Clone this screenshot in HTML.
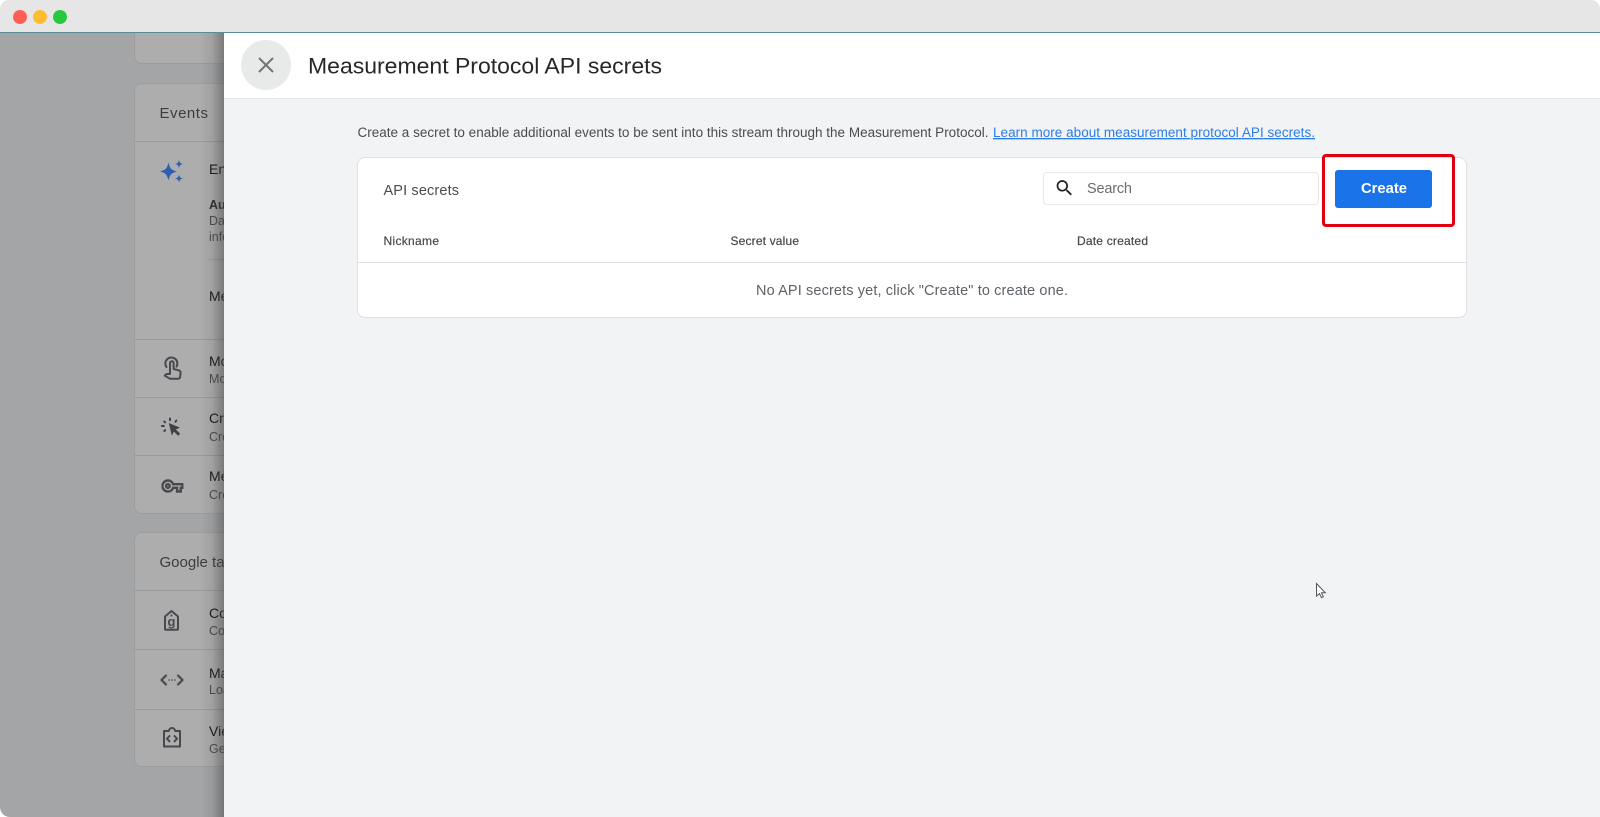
<!DOCTYPE html>
<html lang="en"><head><meta charset="utf-8"><title>Measurement Protocol API secrets</title>
<style>
html,body{margin:0;padding:0;width:1600px;height:817px;overflow:hidden;background:#fff}
body{position:relative;font-family:"Liberation Sans",sans-serif}
div{position:absolute;box-sizing:border-box}
svg{position:absolute;left:0;top:0}
text{font-family:"Liberation Sans",sans-serif}
.b{filter:blur(.35px)}
</style></head><body>
<div style="left:0;top:0;width:1600px;height:817px;border-radius:10px 10px 0 10px;overflow:hidden;background:#a4a5a7">
  <!-- underlying page -->
  <div style="left:134px;top:20px;width:300px;height:44px;background:#adadad;border:1px solid #9c9d9f;border-radius:8px"></div>
  <div style="left:134px;top:83px;width:300px;height:431px;background:#adadad;border:1px solid #9c9d9f;border-radius:8px"></div>
  <div style="left:134px;top:532px;width:300px;height:235px;background:#adadad;border:1px solid #9c9d9f;border-radius:8px"></div>
  <svg width="240" height="817" viewBox="0 0 240 817">
    <g stroke="#9a9b9d" stroke-width="1">
      <path d="M134 141.500H240M209 259.500H240M134 339.500H240M134 397.500H240M134 455.500H240M134 590.500H240M134 649.500H240M134 709.500H240"/>
    </g>
    <g class="b">
    <g font-size="15" fill="#3a3c40">
      <text x="159.500" y="118" textLength="48.500" lengthAdjust="spacing">Events</text>
      <text x="159.500" y="567">Google tag</text>
    </g>
    <g font-size="14" fill="#141416">
      <text x="209" y="174">Enhanced</text>
      <text x="209" y="301">Measurement</text>
      <text x="209" y="366">Modify</text>
      <text x="209" y="423">Create</text>
      <text x="209" y="481">Measurement</text>
      <text x="209" y="618">Configure</text>
      <text x="209" y="678">Manage</text>
      <text x="209" y="736">View</text>
    </g>
    <g font-size="12.500" fill="#47494d">
      <text x="209" y="209" fill="#2a2b30" font-weight="bold">Automatically</text>
      <text x="209" y="225">Data</text>
      <text x="209" y="241">information</text>
      <text x="209" y="383">Modify</text>
      <text x="209" y="441">Create</text>
      <text x="209" y="499">Create</text>
      <text x="209" y="635">Configure</text>
      <text x="209" y="694">Load</text>
      <text x="209" y="753">Get</text>
    </g>
    <!-- sparkle -->
    <g fill="#2f5fae">
      <path d="M168.500 162.500C170 168.500 171.300 170 177 171.500C171.300 173 170 174.500 168.500 180.500C167 174.500 165.700 173 160 171.500C165.700 170 167 168.500 168.500 162.500Z"/>
      <path d="M179 160C179.700 162.800 180.200 163.300 183 164C180.200 164.700 179.700 165.200 179 168C178.300 165.200 177.800 164.700 175 164C177.800 163.300 178.300 162.800 179 160Z"/>
      <path d="M179 174.500C179.700 177.300 180.200 177.800 183 178.500C180.200 179.200 179.700 179.700 179 182.500C178.300 179.700 177.800 179.200 175 178.500C177.800 177.800 178.300 177.300 179 174.500Z"/>
    </g>
    <g fill="none" stroke="#47494f" stroke-width="2" stroke-linejoin="round" stroke-linecap="round">
      <!-- touch -->
      <path d="M170 372V363a1.800 1.800 0 0 1 3.600 0V369l5 1.300c1.200.3 2 1.100 2 2.300l-.5 4.500c-.2 1-.9 1.600-2 1.600H170.500c-.6 0-1.100-.2-1.500-.5l-4.200-2.500 1-1.200c.4-.4 1.500-.9 4.200-.5z"/>
      <path d="M166.500 367a6 6 0 1 1 10-.4"/>
      <!-- code brackets -->
      <path d="M166 675.500l-4.500 4.500 4.500 4.500M178 675.500l4.500 4.500-4.500 4.500" stroke-width="2.200"/>
      <path d="M169 680h.1M172 680h.1M175 680h.1" stroke-width="1.500"/>
      <!-- tag -->
      <path d="M171.500 611l6.500 5.500v12.500c0 .4-.3.700-.7.700h-11.600c-.4 0-.7-.3-.7-.7v-12.500z" stroke-width="2"/>
      <!-- clipboard -->
      <path d="M164 731h4.800c.3-1.700 1.600-3 3.200-3s2.900 1.300 3.200 3h4.800v15.500h-16z" stroke-width="2"/>
      <path d="M169.500 736l-2.500 2.700 2.500 2.700M174.500 736l2.500 2.700-2.500 2.700" stroke-width="2"/>
    </g>
    <text x="171.500" y="626" font-size="13" font-weight="bold" fill="#47494f" text-anchor="middle">g</text>
    <circle cx="171.500" cy="615.500" r="1" fill="#47494f"/>
    <!-- click sparkle cursor -->
    <path d="M168.800 423l11.200 4.600-4.200 1.900 4.400 4.300-2 2-4.400-4.300-1.900 4.200z" fill="#3f4146"/>
    <g stroke="#3f4146" stroke-width="2" stroke-linecap="round">
      <path d="M162 426h1.800M170 418.500v1.800M164.300 421.500l.8.800M176.300 420.500l-.8 1.200M164.300 431l.8-.8"/>
    </g>
    <!-- key -->
    <svg x="161.500" y="475" width="22" height="22" viewBox="0 0 24 24"><path fill="#47494f" stroke="#47494f" stroke-width=".6" d="M22 19h-6v-4h-2.680c-1.140 2.420-3.600 4-6.320 4-3.860 0-7-3.140-7-7s3.140-7 7-7c2.720 0 5.170 1.580 6.320 4H24v6h-2v4zm-4-2h2v-4h2v-2H11.940l-.23-.67C11.010 8.340 9.110 7 7 7c-2.760 0-5 2.240-5 5s2.240 5 5 5c2.110 0 4.010-1.340 4.710-3.330l.23-.67H18v4zM7 15c-1.650 0-3-1.350-3-3s1.350-3 3-3 3 1.350 3 3-1.350 3-3 3zm0-4c-.55 0-1 .45-1 1s.45 1 1 1 1-.45 1-1-.45-1-1-1z"/></svg>
    </g>
  </svg>
  <!-- panel shadow -->
  <div style="left:200px;top:33px;width:24px;height:784px;background:linear-gradient(to right,rgba(70,70,72,0),rgba(70,70,72,.12) 50%,rgba(70,70,72,.5))"></div>
  <!-- title bar -->
  <div style="left:0;top:0;width:1600px;height:33px;background:#e6e6e6;border-bottom:1px solid #5b8d96"></div>
  <div style="left:13px;top:10px;width:14px;height:14px;border-radius:50%;background:#ff5f57"></div>
  <div style="left:33px;top:10px;width:14px;height:14px;border-radius:50%;background:#febc2e"></div>
  <div style="left:53px;top:10px;width:14px;height:14px;border-radius:50%;background:#28c840"></div>
  <!-- panel -->
  <div style="left:224px;top:33px;width:1376px;height:784px;background:#f1f3f5"></div>
  <div style="left:224px;top:33px;width:1376px;height:66px;background:#fff;border-bottom:1px solid #e6e7e8"></div>
  <div style="left:241px;top:40px;width:50px;height:50px;border-radius:50%;background:#e8eaea"></div>
  <!-- card -->
  <div style="left:357px;top:157px;width:1110px;height:161px;background:#fff;border:1px solid #dfe1e4;border-radius:8px"></div>
  <div style="left:358px;top:262px;width:1108px;height:1px;background:#dfe1e4"></div>
  <div style="left:1043px;top:172px;width:276px;height:33px;background:#fff;border:1px solid #e6e8ea;border-radius:4px"></div>
  <div style="left:1335px;top:170px;width:97px;height:38px;background:#1a73e8;border-radius:3px"></div>
  <div style="left:1322px;top:154px;width:133px;height:73px;border:3px solid #e0000f;border-radius:4px"></div>
</div>
<svg width="1600" height="817" viewBox="0 0 1600 817">
  <g class="b">
  <path d="M259 58l14 14M273 58l-14 14" stroke="#70757a" stroke-width="2" fill="none"/>
  <text x="308" y="73.500" font-size="22" fill="#26272a" textLength="354" lengthAdjust="spacingAndGlyphs">Measurement Protocol API secrets</text>
  <text x="357.500" y="137" font-size="13.500" fill="#494c50" textLength="631" lengthAdjust="spacing">Create a secret to enable additional events to be sent into this stream through the Measurement Protocol.</text>
  <text x="993" y="137" font-size="13.500" fill="#2b7de9" text-decoration="underline" textLength="322" lengthAdjust="spacing">Learn more about measurement protocol API secrets.</text>
  <text x="383.500" y="195" font-size="14.500" fill="#494c50" textLength="75.500" lengthAdjust="spacing">API secrets</text>
  <g font-size="12" fill="#45484c" stroke="#45484c" stroke-width=".2">
    <text x="383.500" y="245" textLength="55.500" lengthAdjust="spacing">Nickname</text>
    <text x="730.500" y="245" textLength="68.500" lengthAdjust="spacing">Secret value</text>
    <text x="1077" y="245" textLength="71" lengthAdjust="spacing">Date created</text>
  </g>
  <text x="756" y="295" font-size="14.500" fill="#5f6368" textLength="312" lengthAdjust="spacing">No API secrets yet, click "Create" to create one.</text>
  <text x="1087" y="193" font-size="14.500" fill="#6a6e73" textLength="45" lengthAdjust="spacing">Search</text>
  <text x="1361" y="193" font-size="14.500" font-weight="bold" fill="#fff" textLength="46" lengthAdjust="spacingAndGlyphs">Create</text>
  <svg x="1054" y="177.500" width="21" height="21" viewBox="0 0 24 24"><path fill="#202124" d="M15.500 14h-.79l-.28-.27C15.410 12.590 16 11.110 16 9.500 16 5.910 13.090 3 9.500 3S3 5.910 3 9.500 5.910 16 9.500 16c1.610 0 3.090-.59 4.230-1.570l.27.28v.79l5 4.990L20.490 19l-4.990-5zm-6 0C7.010 14 5 11.990 5 9.500S7.010 5 9.500 5 14 7.010 14 9.500 11.990 14 9.500 14z"/></svg>
  <path d="M1316.500 583.500v12.500l3-2.500 2 4.200 1.800-.9-1.800-4h3.800z" fill="#fff" stroke="#555" stroke-width="1"/>
  </g>
</svg>
</body></html>
